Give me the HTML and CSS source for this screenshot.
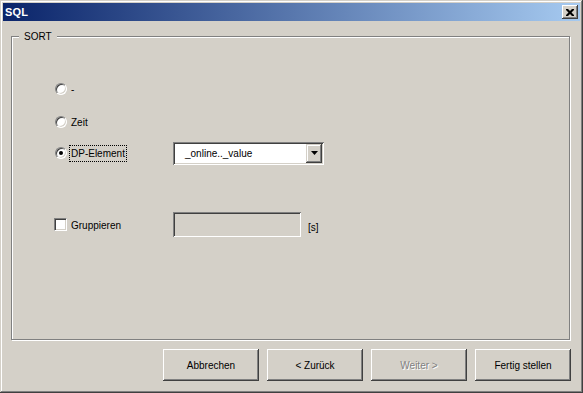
FILE: index.html
```html
<!DOCTYPE html>
<html lang="de">
<head>
    <meta charset="UTF-8">
    <title>SQL</title>
    <link rel="stylesheet" href="styles.css">
</head>
<body>
    <div class="window">
        <div class="titlebar">
            <span class="title">SQL</span>
            <span class="close-btn">
                <svg width="8" height="7" viewBox="0 0 8 7">
                    <path d="M0 0h2l2 2 2-2h2v1l-2.5 2.5 2.5 2.5v1h-2l-2-2-2 2h-2v-1l2.5-2.5-2.5-2.5z" fill="#000"/>
                </svg>
            </span>
        </div>
        <div class="client">
            <div class="group">
                <span class="group-label">SORT</span>
                <div class="options">
                    <div class="row row-first">
                        <span class="radio"></span>
                        <span class="label">-</span>
                    </div>
                    <div class="row row-second">
                        <span class="radio"></span>
                        <span class="label">Zeit</span>
                    </div>
                    <div class="row row-third">
                        <div class="cell">
                            <span class="radio checked"></span>
                            <span class="label focus">DP-Element</span>
                        </div>
                        <div class="combo">
                            <span class="combo-text">_online.._value</span>
                            <span class="combo-btn">
                                <svg width="7" height="4" viewBox="0 0 7 4"><path d="M0 0h7l-3.5 4z" fill="#000"/></svg>
                            </span>
                        </div>
                    </div>
                    <div class="row row-group">
                        <div class="cell">
                            <span class="checkbox"></span>
                            <span class="label">Gruppieren</span>
                        </div>
                        <div class="textbox"></div>
                        <span class="unit">[s]</span>
                    </div>
                </div>
            </div>
            <div class="buttons">
                <span class="btn">Abbrechen</span>
                <span class="btn">&lt; Zurück</span>
                <span class="btn disabled">Weiter &gt;</span>
                <span class="btn">Fertig stellen</span>
            </div>
        </div>
    </div>
</body>
</html>
```

FILE: styles.css
```css
body {
    margin: 0;
    font-family: "Liberation Sans", Arial, sans-serif;
    font-size: 10px;
    color: #000;
    background: #d4d0c8;
}
.window {
    width: 583px;
    height: 393px;
    box-sizing: border-box;
    padding: 3px;
    background: #d4d0c8;
    box-shadow: inset -1px -1px #404040, inset 1px 1px #d4d0c8,
                inset -2px -2px #808080, inset 2px 2px #fff;
    display: flex;
    flex-direction: column;
}
.titlebar {
    height: 18px;
    display: flex;
    align-items: center;
    justify-content: space-between;
    background: linear-gradient(90deg, #0a246a, #a6caf0);
}
.title {
    color: #fff;
    font-weight: bold;
    font-size: 11px;
    padding-left: 2px;
    letter-spacing: 0.2px;
}
.close-btn {
    width: 16px;
    height: 14px;
    margin-right: 2px;
    box-sizing: border-box;
    background: #d4d0c8;
    box-shadow: inset -1px -1px #404040, inset 1px 1px #fff,
                inset -2px -2px #808080, inset 2px 2px #d4d0c8;
    display: flex;
    align-items: center;
    justify-content: center;
}
.close-btn svg {
    display: block;
    margin-left: -1px;
}
.client {
    flex: 1;
    display: flex;
    flex-direction: column;
}
.group {
    position: relative;
    margin: 15px 10px 0 8px;
    height: 304px;
    box-sizing: border-box;
    border: 1px solid #808080;
    box-shadow: 1px 1px 0 #fff, inset 1px 1px 0 #fff;
}
.group-label {
    position: absolute;
    top: -6px;
    left: 7px;
    padding: 0 5px;
    line-height: 12px;
    background: #d4d0c8;
}
.options {
    padding: 40px 0 0 42px;
}
.row {
    display: flex;
    align-items: center;
    height: 24px;
}
.row-second {
    margin-top: 9px;
}
.row-third {
    margin-top: 7px;
}
.row-group {
    margin-top: 47px;
    height: 25px;
}
.row .label {
    padding-top: 1px;
}
.cell {
    display: flex;
    align-items: center;
    width: 119px;
}
.radio {
    position: relative;
    width: 12px;
    height: 12px;
    margin-left: 1px;
    box-sizing: border-box;
    border-radius: 50%;
    background: #fff;
    border: 1px solid;
    border-color: #808080 #fff #fff #808080;
    box-shadow: inset 1px 1px #404040, inset -1px -1px #d4d0c8;
}
.radio.checked::after {
    content: "";
    position: absolute;
    left: 3px;
    top: 3px;
    width: 4px;
    height: 4px;
    border-radius: 50%;
    background: #000;
}
.checkbox {
    width: 13px;
    height: 13px;
    box-sizing: border-box;
    background: #fff;
    border: 1px solid;
    border-color: #808080 #fff #fff #808080;
    box-shadow: inset 1px 1px #404040, inset -1px -1px #d4d0c8;
}
.label {
    margin-left: 4px;
}
.row .label.focus {
    margin-left: 2px;
    padding: 2px 1px 2px;
    border: 1px dotted #000;
}
.combo {
    width: 151px;
    height: 23px;
    box-sizing: border-box;
    padding: 2px;
    background: #fff;
    box-shadow: inset 1px 1px #808080, inset -1px -1px #fff,
                inset 2px 2px #404040, inset -2px -2px #d4d0c8;
    display: flex;
    align-items: center;
    justify-content: space-between;
}
.combo-text {
    padding-left: 10px;
}
.combo-btn {
    width: 16px;
    height: 19px;
    box-sizing: border-box;
    background: #d4d0c8;
    box-shadow: inset -1px -1px #404040, inset 1px 1px #d4d0c8,
                inset -2px -2px #808080, inset 2px 2px #fff;
    display: flex;
    align-items: center;
    justify-content: center;
}
.textbox {
    width: 128px;
    height: 25px;
    box-sizing: border-box;
    background: #d4d0c8;
    box-shadow: inset 1px 1px #808080, inset -1px -1px #fff,
                inset 2px 2px #404040, inset -2px -2px #d4d0c8;
}
.unit {
    margin-left: 7px;
    padding-top: 6px;
}
.buttons {
    display: flex;
    justify-content: flex-end;
    gap: 8px;
    margin: 9px 9px 0 0;
}
.btn {
    width: 96px;
    height: 32px;
    box-sizing: border-box;
    padding-top: 1px;
    background: #d4d0c8;
    box-shadow: inset -1px -1px #404040, inset 1px 1px #fff,
                inset -2px -2px #808080, inset 2px 2px #d4d0c8;
    display: flex;
    align-items: center;
    justify-content: center;
}
.btn.disabled {
    color: #808080;
    text-shadow: 1px 1px 0 #fff;
}
```
